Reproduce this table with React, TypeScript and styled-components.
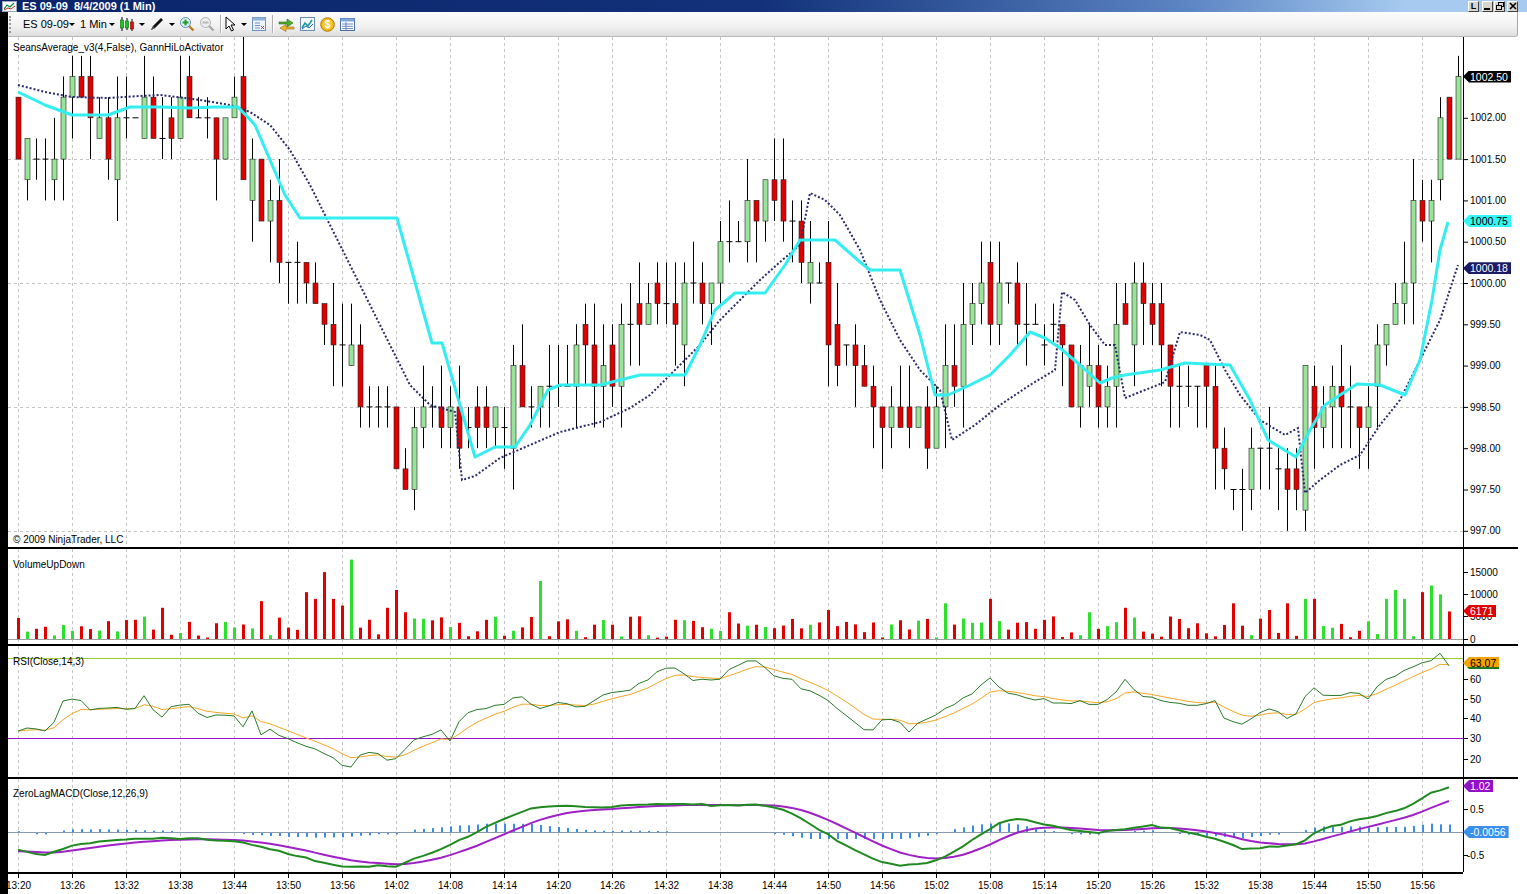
import React from "react";
import styled, { createGlobalStyle } from "styled-components";

const FONT = `"Liberation Sans", Arial, sans-serif`;

const GlobalStyle = createGlobalStyle`
  html, body { margin: 0; padding: 0; background: #fff; overflow: hidden; }
  body { font-family: ${FONT}; }
`;

// ---------- data helpers ----------
type Pt = [number, number];
const N = 161;
const xOf = (i: number) => 18 + 9 * i;
const yP = (p: number) => 283 - (p - 1000) * 82.6;
const yV = (v: number) => 639 - (v * 22.3) / 5000;
const rnd = (i: number, s: number) => {
  const v = Math.sin(i * 12.9898 + s * 78.233) * 43758.5453;
  return v - Math.floor(v);
};
const q = (v: number) => Math.round(v * 4) / 4;
const interp = (pts: Pt[], x: number) => {
  if (x <= pts[0][0]) return pts[0][1];
  for (let k = 1; k < pts.length; k++) {
    if (x <= pts[k][0]) {
      const [x0, y0] = pts[k - 1];
      const [x1, y1] = pts[k];
      return y0 + ((y1 - y0) * (x - x0)) / (x1 - x0);
    }
  }
  return pts[pts.length - 1][1];
};
const toPath = (pts: Pt[]) => pts.map((p) => `${p[0]},${p[1].toFixed(1)}`).join(" ");

const closeAnchors: Pt[] = [
  [0, 1001.5], [3, 1001.5], [5, 1002.0], [6, 1002.25], [8, 1002.0], [10, 1001.9], [13, 1002.0],
  [16, 1001.9], [20, 1001.8], [24, 1001.9], [25, 1001.4], [27, 1001.0], [29, 1000.6], [31, 1000.3],
  [33, 999.7], [35, 999.4], [37, 999.0], [39, 998.6], [41, 998.2], [42, 997.6], [44, 998.2],
  [46, 998.4], [48, 998.5], [49, 997.7], [51, 998.3], [54, 998.6], [58, 998.7], [62, 998.9],
  [66, 999.0], [68, 999.4], [72, 999.8], [75, 1000.0], [77, 999.9], [79, 1000.6], [81, 1000.9],
  [83, 1001.0], [85, 1000.7], [87, 1000.5], [89, 1000.0], [91, 999.2], [93, 998.8], [95, 998.3],
  [98, 998.4], [101, 998.3], [103, 998.8], [105, 999.3], [107, 999.8], [109, 1000.0], [111, 999.5],
  [113, 999.3], [116, 999.0], [118, 998.8], [120, 998.7], [122, 999.2], [124, 999.9], [126, 999.3],
  [128, 999.0], [130, 999.0], [132, 998.5], [134, 997.8], [136, 997.8], [138, 998.1], [140, 997.9],
  [142, 997.8], [143, 998.6], [146, 998.7], [149, 998.5], [151, 998.9], [152, 999.6], [154, 1000.2],
  [156, 1000.9], [158, 1001.7], [159, 1001.5], [160, 1002.5],
];

type Candle = { o: number; h: number; l: number; c: number };
const candles: Candle[] = (() => {
  const out: Candle[] = [];
  let prev = 1002.25;
  for (let i = 0; i < N; i++) {
    const target = interp(closeAnchors, i);
    const o = q(prev + (rnd(i, 7) > 0.75 ? (rnd(i, 8) > 0.5 ? 0.25 : -0.25) : 0));
    const c = q(target + (rnd(i, 1) - 0.5) * 0.7);
    const h = Math.max(o, c) + q(rnd(i, 2) * 0.55);
    const l = Math.min(o, c) - q(rnd(i, 3) * 0.55);
    out.push({ o, h, l, c });
    prev = c;
  }
  out[0] = { o: 1002.25, h: 1002.25, l: 1001.5, c: 1001.5 };
  out[158] = { o: 1001.25, h: 1002.25, l: 1001.0, c: 1002.0 };
  out[159] = { o: 1002.25, h: 1002.25, l: 1001.5, c: 1001.5 };
  out[160] = { o: 1001.5, h: 1002.75, l: 1001.5, c: 1002.5 };
  return out;
})();

const volOverrides: Record<number, number> = {
  16: 7000, 27: 8500, 32: 10500, 33: 9000, 34: 15000, 35: 9000, 36: 7500, 37: 17800, 41: 7000,
  42: 11000, 43: 6000, 58: 13000, 79: 6000, 90: 6500, 103: 8000, 108: 9000, 119: 6000, 123: 7000,
  135: 8000, 139: 6500, 141: 8000, 143: 9000, 144: 9000, 152: 9000, 153: 11000, 154: 9000,
  156: 10500, 157: 12000, 158: 10000, 159: 6171,
};
const volumes = Array.from({ length: 160 }, (_, i) => volOverrides[i] ?? 300 + rnd(i, 9) * 4800);

const cyanLine: Pt[] = [
  [18, 92], [45, 105], [72, 115], [108, 115], [130, 107], [160, 107], [190, 108], [215, 107],
  [238, 107], [255, 125], [270, 160], [285, 195], [300, 218], [397, 218], [432, 343], [442, 343],
  [475, 457], [495, 447], [515, 447], [530, 425], [548, 390], [560, 385], [600, 385], [640, 375],
  [685, 375], [700, 345], [715, 310], [735, 293], [765, 293], [785, 265], [800, 240], [835, 240],
  [860, 262], [870, 270], [900, 270], [920, 335], [935, 395], [948, 395], [970, 385], [990, 375],
  [1010, 355], [1030, 332], [1045, 338], [1060, 348], [1080, 365], [1100, 383], [1112, 378],
  [1125, 375], [1160, 370], [1185, 363], [1230, 365], [1250, 400], [1268, 440], [1296, 457],
  [1310, 430], [1325, 405], [1340, 395], [1357, 384], [1380, 385], [1405, 395], [1420, 360],
  [1432, 300], [1440, 250], [1448, 222],
];

const gannLine: Pt[] = [
  [18, 85], [45, 92], [72, 97], [108, 98], [140, 96], [160, 95], [200, 100], [230, 105], [250, 112],
  [270, 125], [290, 150], [310, 185], [330, 225], [350, 265], [370, 305], [390, 345], [410, 385],
  [430, 405], [455, 412], [462, 480], [475, 476], [500, 458], [530, 445], [560, 432], [600, 422],
  [630, 408], [650, 395], [670, 375], [700, 345], [720, 320], [740, 300], [760, 280], [780, 262],
  [800, 245], [810, 193], [825, 200], [840, 215], [860, 250], [880, 300], [900, 340], [920, 370],
  [940, 390], [952, 440], [975, 425], [1000, 405], [1030, 385], [1055, 370], [1062, 292],
  [1075, 300], [1090, 325], [1105, 345], [1115, 345], [1125, 398], [1145, 390], [1165, 382],
  [1180, 332], [1200, 335], [1210, 340], [1225, 370], [1240, 395], [1260, 420], [1285, 435],
  [1298, 428], [1305, 493], [1320, 480], [1340, 465], [1360, 455], [1380, 425], [1400, 400],
  [1420, 360], [1440, 320], [1458, 265],
];

const rsiAnchors: Pt[] = [
  [18, 730], [45, 730], [55, 720], [63, 699], [80, 699], [90, 708], [135, 708], [145, 693], [155, 712],
  [163, 718], [172, 704], [190, 704], [200, 717], [235, 717], [243, 725], [252, 712], [260, 735],
  [270, 730], [285, 738], [300, 742], [320, 750], [335, 760], [345, 768], [352, 765], [360, 755],
  [375, 752], [390, 760], [400, 755], [410, 740], [425, 735], [440, 730], [450, 740], [465, 712],
  [480, 710], [500, 705], [520, 697], [540, 710], [555, 700], [580, 707], [600, 697], [620, 692],
  [640, 685], [660, 670], [675, 668], [690, 678], [705, 681], [720, 680], [735, 665], [750, 660],
  [762, 663], [775, 675], [790, 678], [805, 690], [820, 697], [840, 710], [855, 722], [868, 735],
  [880, 720], [900, 722], [910, 732], [925, 718], [940, 712], [960, 700], [975, 690], [988, 675],
  [1000, 688], [1020, 697], [1040, 700], [1060, 702], [1080, 702], [1095, 705], [1110, 700],
  [1125, 680], [1140, 695], [1155, 700], [1175, 702], [1200, 705], [1215, 700], [1225, 722],
  [1240, 725], [1255, 718], [1265, 710], [1280, 713], [1292, 720], [1302, 700], [1312, 685],
  [1325, 695], [1340, 695], [1355, 690], [1365, 702], [1375, 690], [1390, 678], [1405, 668],
  [1420, 665], [1432, 660], [1440, 654], [1448, 665],
];

const macdAnchors: Pt[] = [
  [18, 850], [45, 855], [72, 846], [100, 842], [126, 840], [150, 838], [200, 839], [234, 841],
  [260, 847], [290, 854], [320, 862], [345, 868], [370, 866], [397, 866], [420, 857], [445, 847],
  [470, 836], [500, 820], [530, 808], [560, 806], [600, 807], [640, 805], [680, 803], [720, 806],
  [760, 805], [790, 812], [820, 830], [850, 848], [880, 862], [905, 866], [930, 862], [950, 855],
  [975, 838], [1000, 822], [1015, 818], [1040, 823], [1070, 830], [1100, 833], [1130, 828],
  [1150, 825], [1180, 830], [1210, 837], [1245, 850], [1270, 847], [1300, 843], [1320, 830],
  [1350, 822], [1380, 815], [1410, 806], [1430, 793], [1448, 787],
];

const rsiGreen: Pt[] = Array.from({ length: 160 }, (_, i) => [
  xOf(i),
  interp(rsiAnchors, xOf(i)) + (rnd(i, 11) - 0.5) * 4,
]);
const rsiOrange: Pt[] = (() => {
  let e = rsiGreen[0][1];
  return rsiGreen.map(([x, y]) => {
    e = e + (y - e) * 0.3;
    return [x, e] as Pt;
  });
})();
const macdGreen: Pt[] = Array.from({ length: 160 }, (_, i) => [
  xOf(i),
  interp(macdAnchors, xOf(i)) + (rnd(i, 13) - 0.5) * 1.6,
]);
const macdPurple: Pt[] = (() => {
  let e = macdGreen[0][1] + 2;
  return macdGreen.map(([x, y]) => {
    e = e + (y - e) * 0.2;
    return [x, e] as Pt;
  });
})();

const gridXs = Array.from({ length: 27 }, (_, k) => 18 + 54 * k);
const timeLabels = gridXs.map((x, k) => {
  const m = 13 * 60 + 20 + 6 * k;
  return { x, label: `${Math.floor(m / 60)}:${String(m % 60).padStart(2, "0")}` };
});

// ---------- layout ----------
const Screen = styled.div`
  width: 1527px;
  height: 894px;
  display: flex;
  flex-direction: column;
  background: #fff;
  overflow: hidden;
`;

const TitleBar = styled.div`
  height: 12px;
  display: flex;
  align-items: center;
  background: linear-gradient(90deg, #0a246a 0%, #12317a 50%, #5d86c4 78%, #a6caf0 92%);
  color: #fff;
  font: bold 11px ${FONT};
  line-height: 12px;
  padding-left: 2px;
  padding-right: 9px;
`;

const TitleText = styled.span`
  margin-left: 5px;
  white-space: pre;
  flex: 1;
`;

const TitleButton = styled.div<{ $gap?: number }>`
  width: 11px;
  height: 11px;
  margin-left: ${(p) => p.$gap ?? 1}px;
  background: #d8d4cc;
  border: 1px solid;
  border-color: #fff #404040 #404040 #fff;
  box-sizing: border-box;
  display: flex;
  align-items: center;
  justify-content: center;
  color: #000;
  font: bold 9px ${FONT};
`;

const Main = styled.div`
  flex: 1;
  display: flex;
`;

const BlackStrip = styled.div`
  width: 8px;
  background: #000;
`;

const Content = styled.div`
  flex: 1;
  display: flex;
  flex-direction: column;
`;

const Toolbar = styled.div`
  height: 25px;
  width: 1510px;
  box-sizing: border-box;
  display: flex;
  align-items: center;
  background: linear-gradient(#fcfcfc, #f1f1f1 60%, #dedede);
  border-bottom: 1px solid #b8b8b8;
  border-right: 1px solid #a8a8a8;
  border-radius: 0 0 3px 0;
  font: 11px ${FONT};
  color: #000;
`;

const Grip = styled.div`
  width: 12px;
  height: 17px;
  box-sizing: border-box;
  border-left: 2px dotted #9a9a9a;
  margin-left: 1px;
`;

const ToolItem = styled.div<{ $w: number; $pl?: number }>`
  width: ${(p) => p.$w}px;
  padding-left: ${(p) => p.$pl ?? 0}px;
  box-sizing: border-box;
  height: 20px;
  display: flex;
  align-items: center;
  justify-content: ${(p) => (p.$pl !== undefined ? "flex-start" : "center")};
  white-space: nowrap;
`;

const Caret = styled.div<{ $w: number }>`
  width: ${(p) => p.$w}px;
  display: flex;
  justify-content: center;
  &::after {
    content: "";
    border-left: 3px solid transparent;
    border-right: 3px solid transparent;
    border-top: 3px solid #000;
  }
`;

const Separator = styled.div`
  width: 6px;
  height: 18px;
  display: flex;
  justify-content: center;
  &::after {
    content: "";
    width: 1px;
    background: #b0b0b0;
    box-shadow: 1px 0 0 #fff;
  }
`;

const Chart = styled.div`
  width: 1510px;
  display: flex;
  flex-direction: column;
`;

const PanelRow = styled.div<{ $h: number; $border: boolean }>`
  height: ${(p) => p.$h}px;
  display: flex;
  box-sizing: border-box;
  border-bottom: ${(p) => (p.$border ? "2px solid #000" : "none")};
`;

const PlotArea = styled.div`
  width: 1455px;
  height: 100%;
  position: relative;
  svg { display: block; }
`;

const AxisArea = styled.div`
  width: 55px;
  height: 100%;
  position: relative;
  svg { display: block; }
`;

const Flag = styled.div<{ $bg: string; $fg: string; $y: number; $under?: string }>`
  position: absolute;
  left: 0;
  top: ${(p) => p.$y}px;
  height: 12px;
  line-height: 12px;
  padding: 0 3px 0 7px;
  background: ${(p) => p.$bg};
  color: ${(p) => p.$fg};
  font: 10.5px ${FONT};
  clip-path: polygon(0 50%, 6px 0, 100% 0, 100% 100%, 6px 100%);
  box-shadow: ${(p) => (p.$under ? `inset 0 -2px 0 ${p.$under}` : "none")};
`;

const TimeRow = styled.div`
  height: 22px;
  display: flex;
`;

const TimeScale = styled.div`
  width: 1455px;
  height: 100%;
  box-sizing: border-box;
  border-top: 2px solid #000;
  svg { display: block; }
`;

// ---------- svg parts ----------
const Grid = ({ top, bottom }: { top: number; bottom: number }) => (
  <g stroke="#c4c4c4" strokeWidth={1} strokeDasharray="3 3">
    {gridXs.map((x) => (
      <line key={x} x1={x + 0.5} x2={x + 0.5} y1={top} y2={bottom} />
    ))}
  </g>
);

const Tick = ({ y, label, x = 1470 }: { y: number; label: string; x?: number }) => (
  <g>
    <line x1={1463} x2={1468} y1={y + 0.5} y2={y + 0.5} stroke="#000" />
    <text x={x} y={y + 3.6} fontSize={10} fontFamily={FONT} fill="#000">
      {label}
    </text>
  </g>
);

const Label = ({ y, children }: { y: number; children: React.ReactNode }) => (
  <text x={13} y={y} fontSize={10} fontFamily={FONT} fill="#000">
    {children}
  </text>
);

type PanelProps = {
  top: number;
  h: number;
  border?: boolean;
  children?: React.ReactNode;
  axis: React.ReactNode;
  flags?: React.ReactNode;
};

const Panel = ({ top, h, border = true, children, axis, flags }: PanelProps) => {
  const inner = border ? h - 2 : h;
  return (
    <PanelRow $h={h} $border={border}>
      <PlotArea>
        <svg width={1455} height={inner} viewBox={`8 ${top} 1455 ${inner}`}>
          <Grid top={top} bottom={top + inner} />
          {children}
        </svg>
      </PlotArea>
      <AxisArea>
        <svg width={55} height={inner} viewBox={`1463 ${top} 55 ${inner}`}>
          <line x1={1463.5} x2={1463.5} y1={top} y2={top + inner} stroke="#000" />
          {axis}
        </svg>
        {flags}
      </AxisArea>
    </PanelRow>
  );
};

const Candles = () => (
  <g>
    {candles.map((k, i) => {
      const x = xOf(i);
      const t = yP(Math.max(k.o, k.c));
      const b = yP(Math.min(k.o, k.c));
      return (
        <g key={i}>
          <line x1={x + 0.5} x2={x + 0.5} y1={yP(k.h)} y2={yP(k.l)} stroke="#000" />
          {k.o === k.c ? (
            <line x1={x - 2.5} x2={x + 3.5} y1={t} y2={t} stroke="#000" />
          ) : (
            <rect
              x={x - 2}
              y={t}
              width={5}
              height={b - t}
              fill={k.c > k.o ? "#98e498" : "#e00000"}
              stroke="#222"
              strokeWidth={0.6}
            />
          )}
        </g>
      );
    })}
  </g>
);

// ---------- toolbar icons ----------
const CandleIcon = () => (
  <svg width="16" height="16" viewBox="0 0 16 16">
    <line x1="3" y1="1" x2="3" y2="15" stroke="#000" />
    <rect x="1.5" y="4" width="3" height="8" fill="#1cc41c" stroke="#0a6a0a" strokeWidth="0.6" />
    <line x1="8" y1="2" x2="8" y2="14" stroke="#000" />
    <rect x="6.5" y="5" width="3" height="7" fill="#1cc41c" stroke="#0a6a0a" strokeWidth="0.6" />
    <line x1="13" y1="3" x2="13" y2="15" stroke="#000" />
    <rect x="11.5" y="6" width="3" height="7" fill="#e01010" stroke="#700" strokeWidth="0.6" />
  </svg>
);

const PenIcon = () => (
  <svg width="16" height="16" viewBox="0 0 16 16">
    <path d="M2 14 L4 10 L12 2 L14 4 L6 12 Z" fill="#111" />
    <path d="M2 14 L4 10 L6 12 Z" fill="#555" />
  </svg>
);

const ZoomIcon = ({ plus }: { plus: boolean }) => (
  <svg width="16" height="16" viewBox="0 0 16 16">
    <line x1="10" y1="10" x2="14.5" y2="14.5" stroke={plus ? "#c07a20" : "#a8a8a8"} strokeWidth="2.4" />
    <circle cx="6.5" cy="6.5" r="5" fill={plus ? "#e8f4ff" : "#eeeeee"} stroke={plus ? "#5a8ab8" : "#b0b0b0"} />
    {plus ? (
      <path d="M6.5 3.5 V9.5 M3.5 6.5 H9.5" stroke="#18a018" strokeWidth="2" />
    ) : (
      <path d="M3.5 6.5 H9.5" stroke="#b8b8b8" strokeWidth="2" />
    )}
  </svg>
);

const CursorIcon = () => (
  <svg width="12" height="16" viewBox="0 0 12 16">
    <path d="M1 1 L1 13 L4 10 L6.5 15 L8.5 14 L6 9 L10 9 Z" fill="#fff" stroke="#000" strokeWidth="1" />
  </svg>
);

const BoxIcon = () => (
  <svg width="14" height="14" viewBox="0 0 14 14">
    <rect x="0.5" y="0.5" width="13" height="13" fill="#eef4fb" stroke="#6b8fc0" />
    <rect x="0.5" y="0.5" width="13" height="3" fill="#8fb2dc" />
    <path d="M3 6 H8 M3 8.5 H8 M3 11 H8" stroke="#6b8fc0" />
    <path d="M9 9 L12 12 M12 9 L9 12" stroke="#d04040" />
  </svg>
);

const ArrowsIcon = () => (
  <svg width="17" height="15" viewBox="0 0 17 15">
    <path d="M1 5 H9 V2 L15 6 L9 10 V7 H1 Z" fill="#4cae2a" stroke="#2a6e14" strokeWidth="0.6" />
    <path d="M16 10 H8 V7.5 L2 11 L8 14.5 V12 H16 Z" fill="#f0b428" stroke="#9a6a10" strokeWidth="0.6" />
  </svg>
);

const ChartIcon = () => (
  <svg width="15" height="14" viewBox="0 0 15 14">
    <rect x="0.5" y="0.5" width="14" height="13" fill="#f4f8fc" stroke="#6a8ab0" />
    <path d="M2 11 L5 6 L8 9 L12 3" stroke="#1a9aa0" strokeWidth="1.6" fill="none" />
    <path d="M2 12 L6 9 L9 11 L13 7" stroke="#2060c0" strokeWidth="1" fill="none" />
  </svg>
);

const CoinIcon = () => (
  <svg width="15" height="15" viewBox="0 0 15 15">
    <circle cx="7.5" cy="7.5" r="6.8" fill="#f2b416" stroke="#b07a08" />
    <circle cx="7.5" cy="7.5" r="5" fill="#f8c838" />
    <text x="7.5" y="11.2" textAnchor="middle" fontSize="10" fontWeight="bold" fontFamily={FONT} fill="#fff">
      $
    </text>
  </svg>
);

const TableIcon = () => (
  <svg width="15" height="13" viewBox="0 0 15 13">
    <rect x="0.5" y="0.5" width="14" height="12" fill="#fff" stroke="#4a6ea8" />
    <rect x="0.5" y="0.5" width="14" height="3" fill="#7fa4d8" />
    <path d="M2 6 H13 M2 8.3 H13 M2 10.6 H13 M6 4 V12" stroke="#4a6ea8" strokeWidth="0.8" />
  </svg>
);

const WindowIcon = () => (
  <svg width="15" height="11" viewBox="0 0 15 11">
    <rect x="0.5" y="0.5" width="14" height="10" fill="#fff" stroke="#9ab" />
    <path d="M2 8 L5 4 L8 6 L12 2" stroke="#0a8a3a" strokeWidth="1.2" fill="none" />
    <path d="M2 9 L6 7 L9 8 L13 5" stroke="#c02020" strokeWidth="1" fill="none" />
  </svg>
);

// ---------- app ----------
export default function App() {
  const pricePanelTop = 37;
  const priceLabels = [1002.0, 1001.5, 1001.0, 1000.5, 1000.0, 999.5, 999.0, 998.5, 998.0, 997.5, 997.0];

  return (
    <Screen>
      <GlobalStyle />
      <TitleBar>
        <WindowIcon />
        <TitleText>{"ES 09-09  8/4/2009 (1 Min)"}</TitleText>
        <TitleButton>L</TitleButton>
        <TitleButton $gap={3}>
          <svg width="7" height="7" viewBox="0 0 7 7">
            <rect x="0" y="5" width="6" height="2" fill="#000" />
          </svg>
        </TitleButton>
        <TitleButton>
          <svg width="8" height="8" viewBox="0 0 8 8">
            <rect x="2.5" y="0.5" width="5" height="4" fill="none" stroke="#000" />
            <rect x="0.5" y="3.5" width="5" height="4" fill="#d8d4cc" stroke="#000" />
          </svg>
        </TitleButton>
        <TitleButton $gap={2}>
          <svg width="8" height="8" viewBox="0 0 8 8">
            <path d="M1 1 L7 7 M7 1 L1 7" stroke="#000" strokeWidth="1.6" />
          </svg>
        </TitleButton>
      </TitleBar>

      <Main>
        <BlackStrip />
        <Content>
          <Toolbar>
            <Grip />
            <ToolItem $w={46} $pl={2}>ES 09-09</ToolItem>
            <Caret $w={10} />
            <ToolItem $w={30} $pl={3}>1 Min</ToolItem>
            <Caret $w={10} />
            <ToolItem $w={20}>
              <CandleIcon />
            </ToolItem>
            <Caret $w={10} />
            <ToolItem $w={20}>
              <PenIcon />
            </ToolItem>
            <Caret $w={10} />
            <ToolItem $w={20}>
              <ZoomIcon plus />
            </ToolItem>
            <ToolItem $w={20}>
              <ZoomIcon plus={false} />
            </ToolItem>
            <Separator />
            <ToolItem $w={16}>
              <CursorIcon />
            </ToolItem>
            <Caret $w={10} />
            <ToolItem $w={20}>
              <BoxIcon />
            </ToolItem>
            <Separator />
            <ToolItem $w={22}>
              <ArrowsIcon />
            </ToolItem>
            <ToolItem $w={20}>
              <ChartIcon />
            </ToolItem>
            <ToolItem $w={20}>
              <CoinIcon />
            </ToolItem>
            <ToolItem $w={20}>
              <TableIcon />
            </ToolItem>
          </Toolbar>

          <Chart>
            {/* price panel */}
            <Panel
              top={pricePanelTop}
              h={512}
              axis={priceLabels.map((p) => (
                <Tick key={p} y={yP(p)} label={p.toFixed(2)} />
              ))}
              flags={
                <>
                  <Flag $bg="#000" $fg="#fff" $y={yP(1002.5) - pricePanelTop - 6}>1002.50</Flag>
                  <Flag $bg="#33f6f6" $fg="#000" $y={yP(1000.75) - pricePanelTop - 6}>1000.75</Flag>
                  <Flag $bg="#1c1c66" $fg="#fff" $y={yP(1000.18) - pricePanelTop - 6}>1000.18</Flag>
                </>
              }
            >
              <g stroke="#c4c4c4" strokeDasharray="3 3">
                {[997, 998.5, 1000, 1001.5].map((p) => (
                  <line key={p} x1={8} x2={1463} y1={Math.round(yP(p)) + 0.5} y2={Math.round(yP(p)) + 0.5} />
                ))}
              </g>
              <Label y={51}>SeansAverage_v3(4,False), GannHiLoActivator</Label>
              <Candles />
              <polyline points={toPath(gannLine)} fill="none" stroke="#2a2a6c" strokeWidth={2} strokeDasharray="2 2" />
              <polyline points={toPath(cyanLine)} fill="none" stroke="#33eef0" strokeWidth={3} strokeLinejoin="round" />
              <Label y={543}>© 2009 NinjaTrader, LLC</Label>
            </Panel>

            {/* volume panel */}
            <Panel
              top={549}
              h={97}
              axis={
                <>
                  <Tick y={572} label="15000" />
                  <Tick y={594} label="10000" />
                  <Tick y={616} label="5000" />
                  <Tick y={639} label="0" />
                </>
              }
              flags={
                <Flag $bg="#e00000" $fg="#fff" $y={611 - 549 - 6}>6171</Flag>
              }
            >
              <Label y={568}>VolumeUpDown</Label>
              <line x1={8} x2={1463} y1={639.5} y2={639.5} stroke="#a0a0a0" />
              {volumes.map((v, i) => {
                const k = candles[i];
                return (
                  <rect
                    key={i}
                    x={xOf(i) - 1}
                    y={yV(v)}
                    width={3}
                    height={639 - yV(v)}
                    fill={k.c > k.o ? "#2ee02e" : "#e00000"}
                  />
                );
              })}
            </Panel>

            {/* RSI panel */}
            <Panel
              top={646}
              h={133}
              axis={
                <>
                  <Tick y={679} label="60" />
                  <Tick y={699} label="50" />
                  <Tick y={718} label="40" />
                  <Tick y={738} label="30" />
                  <Tick y={759} label="20" />
                </>
              }
              flags={
                <Flag $bg="#f4a300" $fg="#000" $y={663 - 646 - 6} $under="#1f7a1f">63.07</Flag>
              }
            >
              <line x1={8} x2={1463} y1={658.5} y2={658.5} stroke="#9acd32" />
              <line x1={8} x2={1463} y1={738.5} y2={738.5} stroke="#9a10c8" />
              <Label y={665}>RSI(Close,14,3)</Label>
              <polyline points={toPath(rsiOrange)} fill="none" stroke="#f5a623" strokeWidth={1} />
              <polyline points={toPath(rsiGreen)} fill="none" stroke="#2a7a2a" strokeWidth={1} />
            </Panel>

            {/* MACD panel */}
            <Panel
              top={779}
              h={93}
              border={false}
              axis={
                <>
                  <Tick y={809} label="0.5" />
                  <Tick y={855} label="-0.5" x={1467} />
                </>
              }
              flags={
                <>
                  <Flag $bg="#9410c8" $fg="#fff" $y={786 - 779 - 6}>1.02</Flag>
                  <Flag $bg="#3a8ef0" $fg="#fff" $y={832 - 779 - 6}>-0.0056</Flag>
                </>
              }
            >
              <Label y={797}>ZeroLagMACD(Close,12,26,9)</Label>
              <line x1={8} x2={1463} y1={832.5} y2={832.5} stroke="#8a9ab0" />
              {macdGreen.map(([x, y], i) => {
                const d = Math.max(-6, Math.min(9, (macdPurple[i][1] - y) * 0.55));
                if (Math.abs(d) < 0.8) return null;
                return (
                  <rect
                    key={i}
                    x={x}
                    y={d > 0 ? 832 - d : 833}
                    width={2}
                    height={Math.abs(d)}
                    fill="#3a8ee6"
                  />
                );
              })}
              <polyline points={toPath(macdPurple)} fill="none" stroke="#a020c8" strokeWidth={2} />
              <polyline points={toPath(macdGreen)} fill="none" stroke="#1f8a1f" strokeWidth={2} />
            </Panel>

            <TimeRow>
              <TimeScale>
                <svg width={1455} height={20} viewBox="8 874 1455 20">
                  {timeLabels.map((t) => (
                    <g key={t.x}>
                      <line x1={t.x + 0.5} x2={t.x + 0.5} y1={874} y2={878} stroke="#000" />
                      <text x={t.x + 0.5} y={889} fontSize={10} fontFamily={FONT} textAnchor="middle" fill="#000">
                        {t.label}
                      </text>
                    </g>
                  ))}
                </svg>
              </TimeScale>
            </TimeRow>
          </Chart>
        </Content>
      </Main>
    </Screen>
  );
}
